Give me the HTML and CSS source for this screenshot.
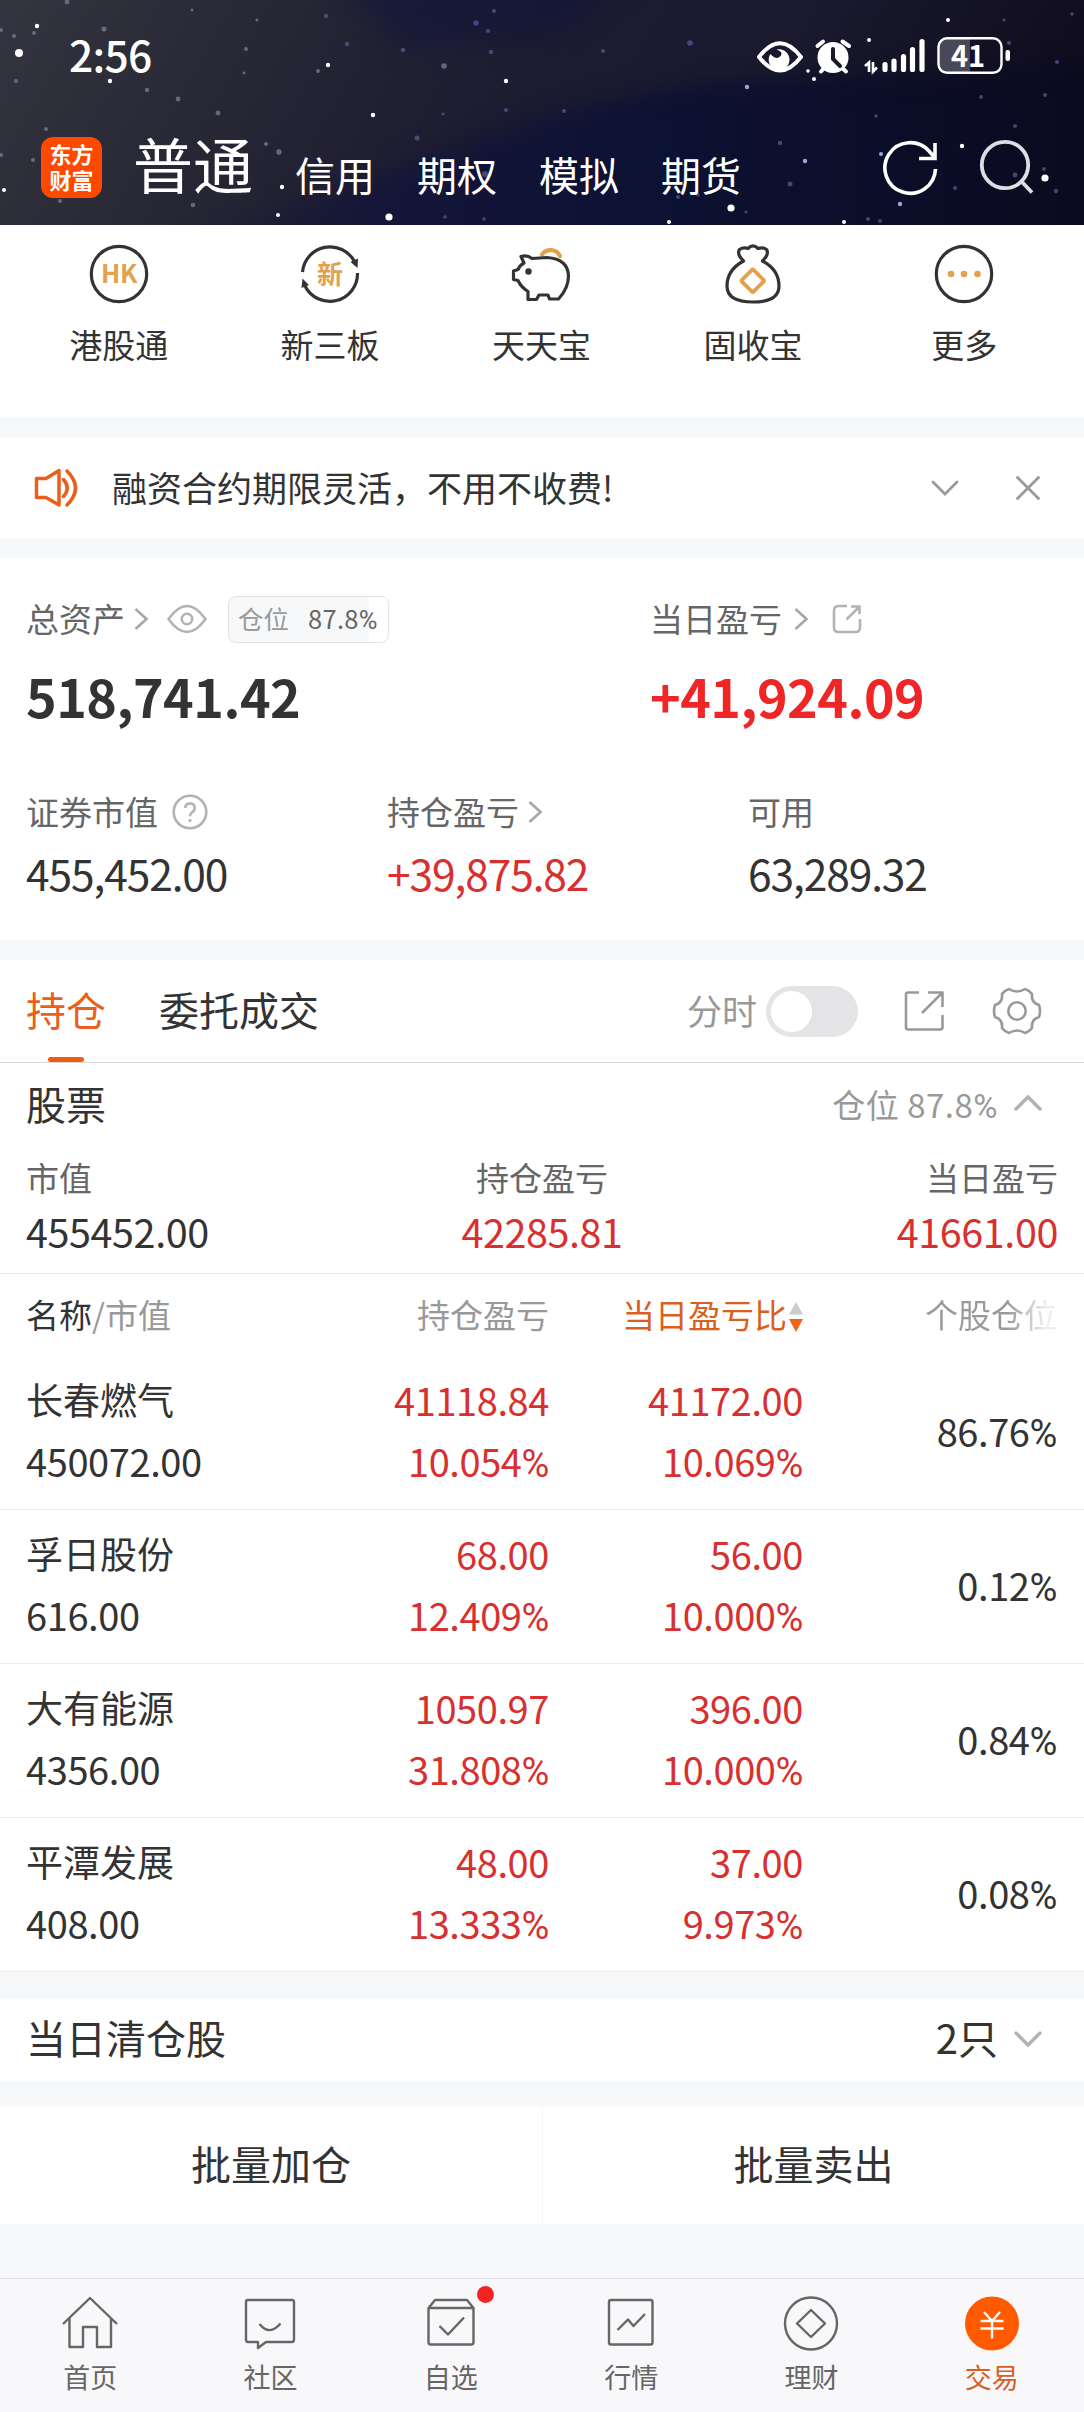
FILE: index.html
```html
<!DOCTYPE html>
<html lang="zh-CN">
<head>
<meta charset="utf-8">
<title>东方财富 交易</title>
<link rel="stylesheet" href="styles.css">
</head>
<body>
<header class="hero">
  <svg class="sky" viewBox="0 0 1084 225" aria-hidden="true">
    <defs>
      <linearGradient id="base" x1="0" y1="0" x2="1" y2="0.12">
        <stop offset="0" stop-color="#343541"/><stop offset=".25" stop-color="#282735"/><stop offset=".5" stop-color="#1d1c31"/><stop offset=".75" stop-color="#1a192d"/><stop offset="1" stop-color="#100d1f"/>
      </linearGradient>
      <linearGradient id="blue" gradientUnits="userSpaceOnUse" x1="0" y1="0" x2="1084" y2="0">
        <stop offset="0" stop-color="#1c1c33" stop-opacity="0"/><stop offset=".35" stop-color="#12143a" stop-opacity=".75"/><stop offset=".6" stop-color="#0c1233"/><stop offset="1" stop-color="#0b0a1f"/>
      </linearGradient>
      <filter id="soft" filterUnits="userSpaceOnUse" x="-100" y="-100" width="1284" height="425" color-interpolation-filters="sRGB"><feGaussianBlur stdDeviation="12"/></filter>
    </defs>
    <rect width="1084" height="225" fill="url(#base)"/>
    <path d="M60 300L330 190L480 140L560 112L700 85L850 75L1160 68V300Z" fill="url(#blue)" filter="url(#soft)"/>
    <path d="M300 -60H680L560 36L400 50Z" fill="#11143a" opacity=".55" filter="url(#soft)"/>
    <g fill="#fff">
      <circle cx="19" cy="53" r="4"/><circle cx="37" cy="26" r="2.2"/><circle cx="110" cy="81" r="2.2"/><circle cx="328" cy="65" r="2.2"/><circle cx="373" cy="115" r="2.2"/><circle cx="506" cy="81" r="2.2"/><circle cx="4" cy="190" r="2"/><circle cx="282" cy="187" r="2.2"/><circle cx="278" cy="215" r="2"/><circle cx="389" cy="217" r="3.6"/><circle cx="948" cy="20" r="2"/><circle cx="869" cy="40" r="2"/><circle cx="814" cy="79" r="2"/><circle cx="808" cy="71" r="1.8"/><circle cx="962" cy="146" r="2.2"/><circle cx="1045" cy="178" r="3.6"/><circle cx="731" cy="208" r="3.6"/><circle cx="669" cy="222" r="2"/><circle cx="844" cy="222" r="2"/>
    </g>
    <g fill="#9ca4dc">
      <circle cx="747" cy="87" r="2.2"/><circle cx="900" cy="204" r="2.2"/><circle cx="805" cy="161" r="2.2"/><circle cx="881" cy="154" r="2"/>
    </g>
    <g fill="#8580a8" opacity=".7">
      <circle cx="67" cy="2" r="2.4"/><circle cx="104" cy="29" r="2.5"/><circle cx="14" cy="36" r="2"/><circle cx="34" cy="33" r="2"/><circle cx="1" cy="30" r="2"/><circle cx="16" cy="81" r="2"/><circle cx="147" cy="90" r="2.2"/><circle cx="178" cy="99" r="2.4"/><circle cx="218" cy="113" r="2.4"/><circle cx="246" cy="49" r="2"/><circle cx="46" cy="129" r="2"/><circle cx="33" cy="160" r="2"/><circle cx="1" cy="155" r="2"/><circle cx="60" cy="201" r="2"/><circle cx="193" cy="205" r="2.3"/><circle cx="279" cy="152" r="2.7"/><circle cx="266" cy="144" r="2"/><circle cx="244" cy="73" r="1.5"/><circle cx="318" cy="71" r="2"/><circle cx="444" cy="66" r="2.8"/><circle cx="257" cy="20" r="1.6"/><circle cx="192" cy="10" r="1.4"/>
    </g>
    <g fill="#585793" opacity=".75">
      <circle cx="326" cy="16" r="2.2"/><circle cx="347" cy="44" r="2.2"/><circle cx="403" cy="50" r="2.2"/><circle cx="476" cy="23" r="2.7"/><circle cx="494" cy="11" r="2"/><circle cx="488" cy="31" r="2"/><circle cx="491" cy="52" r="2.2"/><circle cx="506" cy="110" r="2"/><circle cx="417" cy="138" r="2.5"/><circle cx="485" cy="174" r="3"/><circle cx="443" cy="114" r="1.6"/><circle cx="445" cy="217" r="1.8"/><circle cx="484" cy="219" r="1.8"/><circle cx="690" cy="43" r="2.8"/><circle cx="603" cy="51" r="2"/><circle cx="564" cy="111" r="2"/><circle cx="780" cy="143" r="2.2"/><circle cx="790" cy="184" r="2.5"/><circle cx="678" cy="197" r="2"/><circle cx="698" cy="195" r="1.8"/><circle cx="746" cy="212" r="1.6"/><circle cx="876" cy="116" r="1.7"/><circle cx="981" cy="97" r="2"/><circle cx="1015" cy="126" r="2"/><circle cx="1045" cy="95" r="2"/><circle cx="1057" cy="62" r="2"/><circle cx="1009" cy="43" r="2"/><circle cx="1072" cy="14" r="1.8"/><circle cx="1004" cy="20" r="1.6"/><circle cx="1015" cy="175" r="2.4"/><circle cx="1056" cy="191" r="2.2"/><circle cx="1044" cy="169" r="2"/><circle cx="955" cy="188" r="2"/><circle cx="868" cy="219" r="2"/><circle cx="880" cy="221" r="2"/>
    </g>
  </svg>
  <div class="status">
    <span class="clock">2:56</span>
    <svg class="status-icons" width="256" height="56" viewBox="756 28 256 56">
      <path d="M759 57Q780 29.500 801 57Q780 84 759 57Z" fill="none" stroke="#fff" stroke-width="4" stroke-linejoin="round"/>
      <path d="M776.500 49.500A10.400 10.400 0 1 1 770.300 54Q777 61 781 55.500Q783 51.500 776.500 49.500Z" fill="#fff"/>
      <path d="M817.500 46L823 41.500M842.500 41.500L849 46M821 71.500L825 67M841 67L846 71.500" stroke="#fff" stroke-width="4" stroke-linecap="round"/>
      <circle cx="833" cy="57.500" r="15.500" fill="#fff"/>
      <path d="M833 49V59L840 66" fill="none" stroke="#1b1a2b" stroke-width="4" stroke-linecap="round"/>
      <path d="M865 66L869 62.500V72M873 62V71.500L877 67.500" fill="none" stroke="#fff" stroke-width="2.600"/>
      <path d="M885 64.500V69.500M894 61V69.500M903.500 56.500V69.500M912.500 49.500V69.500M922 41.500V69.500" stroke="#fff" stroke-width="5.200" stroke-linecap="round"/>
      <path d="M946 39H970V73H946Q939 73 939 66V46Q939 39 946 39Z" fill="#494858"/>
      <rect x="938.500" y="38.300" width="63" height="34.500" rx="8.500" fill="none" stroke="#fff" stroke-width="2.400"/>
      <rect x="1005.500" y="50" width="4.500" height="11" rx="2" fill="#fff"/>
      <text x="968" y="66.500" text-anchor="middle" class="battery-text">41</text>
    </svg>
  </div>
  <div class="topbar">
    <div class="logo"><span>东方</span><span>财富</span></div>
    <nav class="accounts"><b>普通</b><span>信用</span><span>期权</span><span>模拟</span><span>期货</span></nav>
    <svg class="hero-actions" width="156" height="60" viewBox="880 137 156 60" fill="none" stroke="#fff">
      <path d="M935.500 169A25.300 25.300 0 1 1 929 151L935 158" stroke-width="3.600"/>
      <path d="M935 143V158.500H919" stroke-width="3.600"/>
      <g stroke="#dddde5" stroke-width="3.800"><circle cx="1005" cy="165" r="23.200"/><path d="M1021 181L1032 192.500"/></g>
    </svg>
  </div>
</header>

<section class="quick">
  <div class="quick-item">
    <svg width="60" height="60" viewBox="0 0 60 60"><circle cx="30" cy="30" r="27.700" class="ink"/><text x="30" y="39" class="hk">HK</text></svg>
    <span>港股通</span>
  </div>
  <div class="quick-item">
    <svg width="60" height="60" viewBox="0 0 60 60"><path d="M2.500 28A27.700 27.700 0 0 1 54.500 17.500M57.500 29A27.700 27.700 0 0 1 5 42" class="ink"/><path d="M50.500 18L58 14.500L57.500 24ZM1.500 44L2.500 34.500L9 41Z" fill="#333"/><text x="30" y="39.500" class="xin">新</text></svg>
    <span>新三板</span>
  </div>
  <div class="quick-item">
    <svg width="60" height="60" viewBox="0 0 60 60"><path d="M31 10.500A10.500 10.500 0 0 1 49 12" fill="none" stroke="#e2a14c" stroke-width="4.200" stroke-linecap="round"/><path d="M10 12.500Q16 10.500 21 14.500L36 13.500Q57 15 57.500 32Q57.500 44 47.500 55H38.500L37 51H28L25.500 55.500H17V47.500Q10 43 7 36.500L2.500 35.500V27L7 25.500Q9 21 13 19Z" class="ink"/><circle cx="17.500" cy="27.500" r="3.200" fill="#333"/></svg>
    <span>天天宝</span>
  </div>
  <div class="quick-item">
    <svg width="60" height="60" viewBox="0 0 60 60"><path d="M20.500 17Q13.500 10 16.500 5.500Q20 3 25 4.500Q30 -0.500 35 4.500Q40 3 43.500 5.500Q46.500 10 39.500 17Q56 26 56 42Q56 58 30 58Q4 58 4 42Q4 26 20.500 17Z" class="ink"/><rect x="21.500" y="28.500" width="16.500" height="16.500" rx="1.500" transform="rotate(45 29.750 36.750)" fill="none" stroke="#e2a14c" stroke-width="3.800"/></svg>
    <span>固收宝</span>
  </div>
  <div class="quick-item">
    <svg width="60" height="60" viewBox="0 0 60 60"><circle cx="30" cy="30" r="27.700" class="ink"/><g fill="#e2a14c"><circle cx="17" cy="30" r="3.300"/><circle cx="30" cy="30" r="3.300"/><circle cx="43.500" cy="30" r="3.300"/></g></svg>
    <span>更多</span>
  </div>
</section>

<section class="notice">
  <svg width="46" height="42" viewBox="0 0 46 42" fill="none" stroke="#ea5f1c" stroke-width="3.500" stroke-linejoin="round" stroke-linecap="round"><path d="M3.500 11.500H13L26 3.500V38L13 30.500H3.500ZM30.500 12.500Q38 21 30.500 29.500M34 4Q51 21 34 38"/></svg>
  <p>融资合约期限灵活，不用不收费!</p>
  <svg width="30" height="20" viewBox="0 0 30 20"><path d="M3 4L15 16L27 4"/></svg>
  <svg width="26" height="26" viewBox="0 0 26 26"><path d="M2.500 2.500L23.500 23.500M23.500 2.500L2.500 23.500"/></svg>
</section>

<section class="assets">
  <div class="totals">
    <div class="total">
      <div class="label"><span>总资产</span>
        <svg class="arrow" width="16" height="24" viewBox="0 0 16 24"><path d="M2.500 2L13.500 12L2.500 22"/></svg>
        <svg class="eye" width="42" height="30" viewBox="0 0 42 30"><path d="M2.500 15Q21 -11 39.500 15Q21 41 2.500 15Z"/><circle cx="21" cy="15" r="5.200"/></svg>
        <span class="chip"><i>仓位</i><em>87.8<span class="pct">%</span></em></span>
      </div>
      <div class="big">518,741.42</div>
    </div>
    <div class="total">
      <div class="label"><span>当日盈亏</span>
        <svg class="arrow day" width="16" height="24" viewBox="0 0 16 24"><path d="M2.500 2L13.500 12L2.500 22"/></svg>
        <svg class="share" width="30" height="30" viewBox="0 0 30 30"><path d="M15 2H6.500Q2 2 2 6.500V23.500Q2 28 6.500 28H23.500Q28 28 28 23.500V15M14.500 15.500L27 3M19 2.500H27.500V10"/></svg>
      </div>
      <div class="big up-bright">+41,924.09</div>
    </div>
  </div>
  <div class="details">
    <div><div class="label"><span>证券市值</span><svg class="help" width="36" height="36" viewBox="0 0 36 36"><circle cx="18" cy="18" r="16.300"/><path d="M13.300 14Q13.300 9.500 18 9.500Q22.700 9.500 22.700 14Q22.700 16.500 20 18.300Q18 19.800 18 22.300M18 25V28"/></svg></div><div class="mid">455,452.00</div></div>
    <div><div class="label"><span>持仓盈亏</span><svg class="arrow tight" width="16" height="24" viewBox="0 0 16 24"><path d="M2.500 2L13.500 12L2.500 22"/></svg></div><div class="mid up">+39,875.82</div></div>
    <div><div class="label"><span>可用</span></div><div class="mid">63,289.32</div></div>
  </div>
</section>

<section class="holdings">
  <div class="tabs">
    <span class="tab active">持仓</span>
    <span class="tab">委托成交</span>
    <div class="tools">
      <span>分时</span>
      <span class="toggle"></span>
      <svg class="export" width="42" height="42" viewBox="0 0 42 42"><path d="M16 2.500H5Q3 2.500 3 4.500V37Q3 39.500 5 39.500H37Q39.500 39.500 39.500 37V25M19 23L39 3M25 2.500H39.500V17"/></svg>
      <svg class="gear" width="50" height="48" viewBox="0 0 50 48"><path d="M17 2Q25 7 33 2Q37.500 3.500 40 7Q39 15.500 47 18Q49 24 47 30Q39 32.500 40 41Q37.500 44.500 33 46Q25 41 17 46Q12.500 44.500 10 41Q11 32.500 3 30Q1 24 3 18Q11 15.500 10 7Q12.500 3.500 17 2Z"/><circle cx="25" cy="24" r="8.700"/></svg>
    </div>
  </div>

  <div class="group-head"><h2>股票</h2><span class="position">仓位 87.8<span class="pct">%</span></span><svg width="30" height="20" viewBox="0 0 30 20"><path d="M3 16L15 4L27 16"/></svg></div>
  <div class="group-sum">
    <div><span>市值</span><b>455452.00</b></div>
    <div><span>持仓盈亏</span><b class="up">42285.81</b></div>
    <div><span>当日盈亏</span><b class="up">41661.00</b></div>
  </div>

  <div class="cols">
    <div><span class="dark">名称</span>/市值</div>
    <div>持仓盈亏</div>
    <div class="sorted"><span>当日盈亏比</span><svg width="14" height="30" viewBox="0 0 14 30"><path d="M7 0L14 12.500H0Z" fill="#ccc"/><path d="M0 17H14L7 30Z" fill="#f26516"/></svg></div>
    <div><span class="fade">个股仓位</span></div>
  </div>

  <div class="row">
    <div><span>长春燃气</span><span>450072.00</span></div>
    <div class="up"><span>41118.84</span><span>10.054<span class="pct">%</span></span></div>
    <div class="up"><span>41172.00</span><span>10.069<span class="pct">%</span></span></div>
    <div><span>86.76<span class="pct">%</span></span></div>
  </div>
  <div class="row">
    <div><span>孚日股份</span><span>616.00</span></div>
    <div class="up"><span>68.00</span><span>12.409<span class="pct">%</span></span></div>
    <div class="up"><span>56.00</span><span>10.000<span class="pct">%</span></span></div>
    <div><span>0.12<span class="pct">%</span></span></div>
  </div>
  <div class="row">
    <div><span>大有能源</span><span>4356.00</span></div>
    <div class="up"><span>1050.97</span><span>31.808<span class="pct">%</span></span></div>
    <div class="up"><span>396.00</span><span>10.000<span class="pct">%</span></span></div>
    <div><span>0.84<span class="pct">%</span></span></div>
  </div>
  <div class="row">
    <div><span>平潭发展</span><span>408.00</span></div>
    <div class="up"><span>48.00</span><span>13.333<span class="pct">%</span></span></div>
    <div class="up"><span>37.00</span><span>9.973<span class="pct">%</span></span></div>
    <div><span>0.08<span class="pct">%</span></span></div>
  </div>
</section>

<section class="cleared"><h2>当日清仓股</h2><span>2只</span><svg width="30" height="20" viewBox="0 0 30 20"><path d="M3 4L15 16L27 4"/></svg></section>

<section class="batch"><span>批量加仓</span><span>批量卖出</span></section>

<nav class="bottom">
  <a><svg width="60" height="60" viewBox="0 0 60 60"><path d="M3 31L30 5L57 31M9.500 25.500V54H23V34H37V54H51V25.500"/></svg>首页</a>
  <a><svg width="60" height="60" viewBox="0 0 60 60"><path d="M8 7H52Q54 7 54 9V46.500Q54 49 52 49H26L18 55V49H8Q6 49 6 46.500V9Q6 7 8 7ZM19.500 31Q29.500 43.500 40.500 30.500"/></svg>社区</a>
  <a><svg width="60" height="60" viewBox="0 0 60 60"><path d="M7.500 15H52.500V49Q52.500 51.500 50.500 51.500H9.500Q7.500 51.500 7.500 49V15L14 7H46L52.500 15M18.500 33L27 41.500L43 24.500"/></svg>自选<i class="dot"></i></a>
  <a><svg width="60" height="60" viewBox="0 0 60 60"><rect x="8" y="7" width="43.500" height="44.500" rx="2"/><path d="M16.500 37L27 26.500L32.500 33L44 21"/></svg>行情</a>
  <a><svg width="60" height="60" viewBox="0 0 60 60"><circle cx="30" cy="30.500" r="26"/><path d="M30 17L44 30.500L30 44L16 30.500Z"/></svg>理财</a>
  <a class="current"><svg width="60" height="60" viewBox="0 0 60 60"><circle cx="30" cy="30.500" r="27" class="disc"/><path d="M22 19L30 28L38 19M18.500 28H41.500M18.500 35.500H41.500M30 28V45.500" stroke="#fff" stroke-width="2.400"/></svg>交易</a>
</nav>
</body>
</html>
```

FILE: styles.css
```css
* { box-sizing: border-box; }
body {
  margin: 0;
  width: 1084px;
  height: 2412px;
  display: flex;
  flex-direction: column;
  background: #f7f8fa;
  color: #333;
  font-family: "Noto Sans CJK SC", sans-serif;
  font-size: 33px;
  line-height: 1;
}
svg { flex: none; display: block; fill: none; }
h2, p { margin: 0; font-weight: 400; }
b, i, em { font-weight: 400; font-style: normal; }
section { background: #fff; }
.up { color: #d8302f; }
.pct { font-family: Roboto, sans-serif; line-height: 0; }

/* header */
.hero { position: relative; height: 225px; color: #fff; overflow: hidden; }
.sky { position: absolute; inset: 0; width: 1084px; height: 225px; }
.status { position: relative; height: 112px; padding: 0 72px 0 69px; display: flex; justify-content: space-between; align-items: center; }
.clock { font-size: 42.5px; font-weight: 500; letter-spacing: -0.7px; margin-top: -3px; }
.status-icons { overflow: visible; }
.battery-text { font: 700 29px "Noto Sans CJK SC", sans-serif; fill: #fff; }
.topbar { position: relative; height: 113px; padding: 0 48px 0 41px; display: flex; align-items: flex-start; }
.logo {
  width: 61px; height: 61px; margin-top: 25px; border-radius: 12px; background: #ff4800;
  display: flex; flex-direction: column; align-items: center; justify-content: center;
  font-size: 22px; font-weight: 700; line-height: 26px; padding-bottom: 3px;
}
.accounts { display: flex; align-items: flex-start; gap: 42px; margin: 21px 0 0 31px; font-size: 40px; line-height: 60px; }
.accounts b { font-size: 60px; }
.accounts span { margin-top: 11px; }
.hero-actions { margin: 25px 0 0 auto; }

/* shortcuts */
.quick { height: 192px; padding: 19px 14px 0 13px; display: grid; grid-template-columns: repeat(5, 1fr); }
.quick-item { display: flex; flex-direction: column; align-items: center; gap: 24px; }
.ink { fill: none; stroke: #333; stroke-width: 3.2; stroke-linejoin: round; }
.hk { font: 700 25.5px "Noto Sans CJK SC", sans-serif; fill: #e2a14c; text-anchor: middle; letter-spacing: -0.5px; }
.xin { font: 700 26px "Noto Sans CJK SC", sans-serif; fill: #e2a14c; text-anchor: middle; }

.notice { height: 102px; margin-top: 20px; padding: 0 43px 0 33px; display: flex; align-items: center; }
.notice p { flex: 1; margin-left: 33px; margin-top: -2px; font-size: 35px; line-height: 40px; }
.notice svg + svg { margin-left: 55px; }
.notice svg:nth-of-type(n+2) { stroke: #999; stroke-width: 2.8; stroke-linecap: round; }

/* assets */
.assets { height: 382px; margin-top: 19px; padding: 38px 27px 0 26px; }
.totals { display: grid; grid-template-columns: 624px 1fr; }
.details { display: grid; grid-template-columns: 361px 361px 1fr; margin-top: 60px; }
.label { display: flex; align-items: center; height: 46px; color: #666; line-height: 42px; }
.label > span:first-child { margin-top: -3px; }
.label svg { stroke: #b3b3b3; stroke-width: 2.6; }
.assets .arrow { margin-left: 8px; stroke: #a6a6a6; }
.assets .day { margin-left: 11px; }
.eye { margin-left: 17px; }
.share { margin-left: 23px; }
.help { margin-left: 14px; }
.chip {
  display: flex; align-items: center; width: 161px; height: 47px; margin-left: 20px; padding-left: 9px;
  border: 1px solid #e2e2e2; border-radius: 8px; font-size: 25.5px; line-height: 40px; color: #999;
  background: linear-gradient(90deg, #f7f8fa 88%, #fff 88%);
}
.chip i, .chip em { padding-bottom: 2px; }
.chip em { margin-left: 19px; color: #666; letter-spacing: 0.3px; }
.big { height: 66px; margin-top: 21px; font-size: 52px; font-weight: 700; line-height: 66px; letter-spacing: -0.5px; }
.up-bright { color: #f02626; }
.mid { margin-top: 15px; font-size: 42.5px; line-height: 46px; letter-spacing: -1.1px; }

/* holdings */
.holdings { margin-top: 20px; height: 1012px; }
.tabs { height: 103px; padding: 0 42px 0 26px; display: flex; align-items: stretch; border-bottom: 1px solid #d9d9d9; font-size: 40px; line-height: 98px; }
.tab + .tab { margin-left: 53px; }
.tab.active { color: #ea5f1c; position: relative; }
.tab.active::after { content: ""; position: absolute; left: 22px; bottom: 0; width: 36px; height: 5px; border-radius: 3px; background: #ed5d13; }
.tools { margin-left: auto; display: flex; align-items: center; font-size: 35px; color: #999; }
.tools > span:first-child { margin-top: -2px; }
.tools svg { stroke: #999; stroke-width: 2.6; stroke-linejoin: round; }
.toggle { width: 92px; height: 51px; margin-left: 9px; padding: 5px; border-radius: 26px; background: #e4e4e6; }
.toggle::before { content: ""; display: block; width: 41px; height: 41px; border-radius: 50%; background: #fff; }
.export { margin-left: 45px; }
.gear { margin-left: 47px; }
.group-head { height: 80px; padding: 0 41px 0 26px; display: flex; align-items: center; line-height: 80px; color: #999; }
.group-head h2, .cleared h2 { flex: 1; color: #333; font-size: 40px; }
.position { letter-spacing: 0.5px; padding-top: 1px; }
.group-head svg, .cleared svg { stroke: #b3b3b3; stroke-width: 3.5; stroke-linecap: round; margin-left: 15px; }
.group-sum { height: 131px; padding: 11px 26px 0; display: grid; grid-template-columns: repeat(3, 1fr); border-bottom: 1px solid #e9e9e9; }
.group-sum div { display: flex; flex-direction: column; align-items: center; color: #666; }
.group-sum div:first-child { align-items: flex-start; }
.group-sum div:last-child { align-items: flex-end; }
.group-sum span { line-height: 46px; }
.group-sum b { margin-top: 6px; font-size: 39.5px; line-height: 50px; letter-spacing: -0.4px; }
.group-sum b:not(.up) { color: #333; }
.group-sum .up { color: #d8302f; }
.cols, .row { display: grid; grid-template-columns: 269px 254px 254px 254px; padding: 0 27px 0 26px; }
.cols { height: 82px; line-height: 80px; color: #999; }
.cols div { text-align: right; }
.cols div:first-child { text-align: left; }
.dark { color: #333; }
.cols .sorted { display: flex; align-items: flex-start; justify-content: flex-end; color: #d9601e; }
.sorted svg { margin: 28px 0 0 2px; }
.fade { background: linear-gradient(90deg, #999 62%, #eee 92%); -webkit-background-clip: text; background-clip: text; color: transparent; }
.row { height: 154px; font-size: 38px; border-bottom: 1px solid #ebebeb; letter-spacing: -0.4px; }
.row div { display: flex; flex-direction: column; justify-content: center; text-align: right; padding-bottom: 5px; }
.row div > span { line-height: 61px; }
.row div:first-child { text-align: left; }
.row div:first-child > span:first-child { font-size: 37px; letter-spacing: 0; }

.cleared { height: 82px; margin-top: 27px; padding: 0 41px 0 26px; display: flex; align-items: center; font-size: 40px; line-height: 76px; }
.cleared h2, .cleared > span { padding-bottom: 6px; }
.cleared svg { margin-top: -2px; }
.batch { height: 117px; margin-top: 26px; display: grid; grid-template-columns: 1fr 1fr; font-size: 40px; line-height: 112px; text-align: center; }
.batch span + span { border-left: 1px solid #f5f5f7; }

/* tab bar */
.bottom { height: 134px; margin-top: auto; padding: 14px 2px 0 0; display: grid; grid-template-columns: repeat(6, 1fr); background: #f8f8fb; border-top: 1px solid #e2e2e5; }
.bottom a { position: relative; display: flex; flex-direction: column; align-items: center; font-size: 27px; line-height: 40px; color: #666; gap: 4px; }
.bottom svg { stroke: #666; stroke-width: 2.4; stroke-linejoin: round; }
.bottom .current { color: #d9601e; }
.bottom .disc { fill: #ff5a00; stroke: none; }
.dot { position: absolute; left: 116px; top: -7px; width: 17px; height: 17px; border-radius: 50%; background: #f12424; }
```
